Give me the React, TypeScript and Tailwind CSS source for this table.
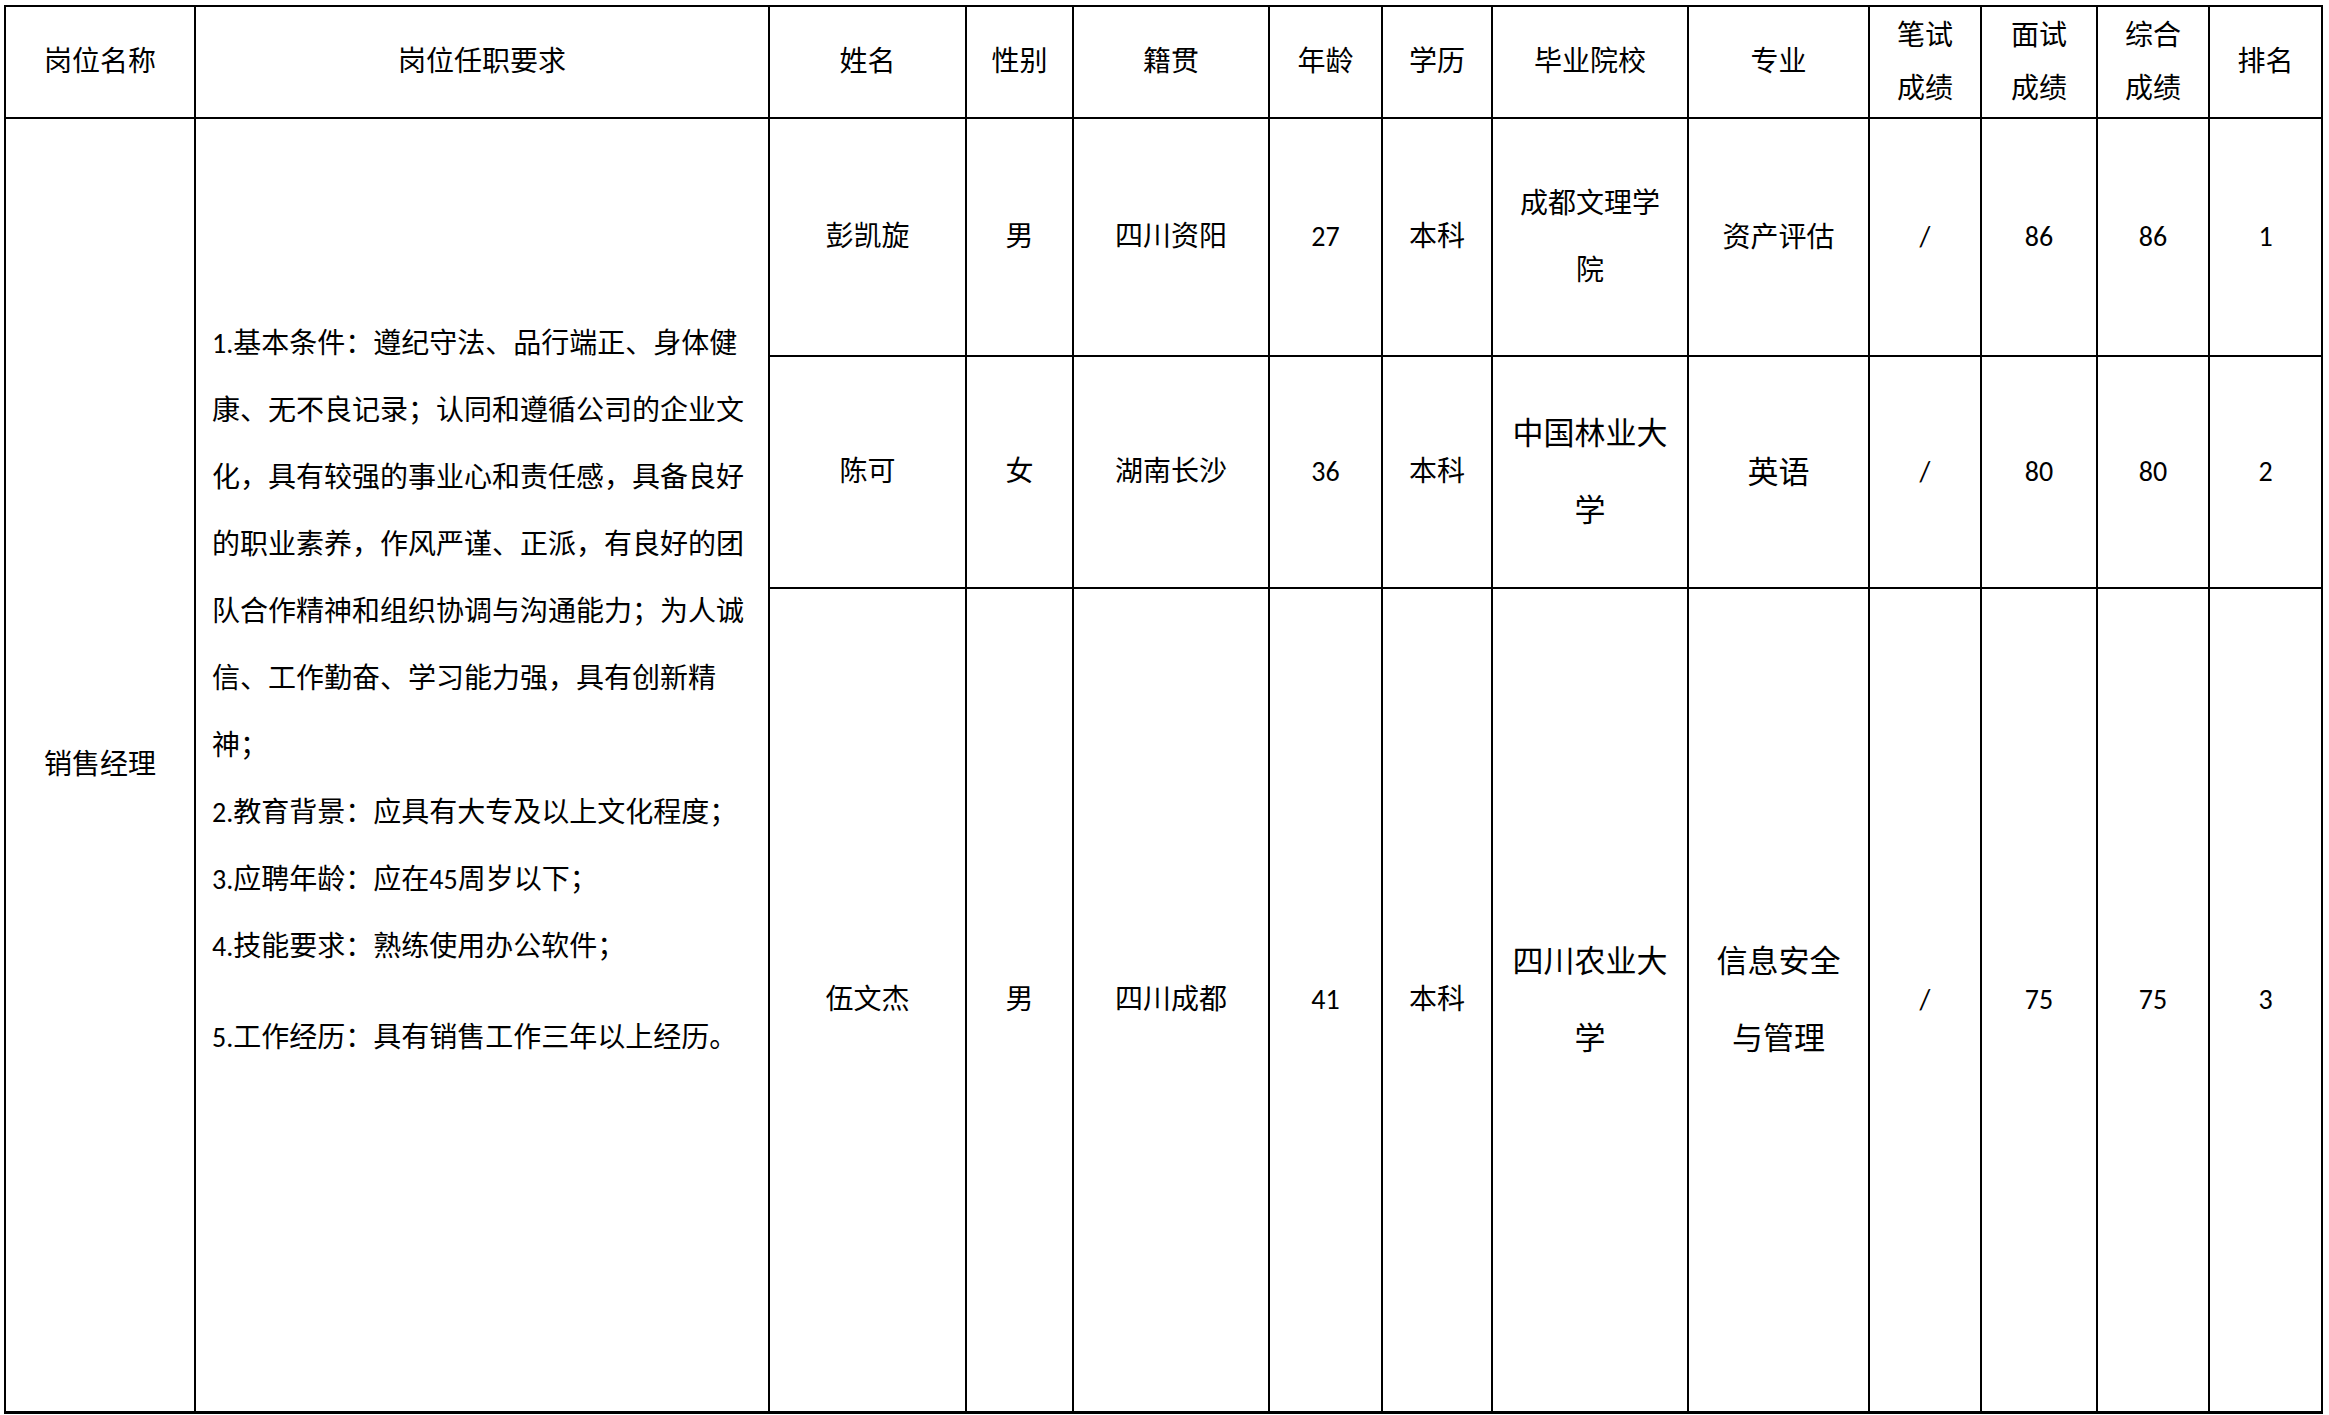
import * as React from "react";

type Cand = {
  name: string;
  sex: string;
  origin: string;
  age: string;
  edu: string;
  school: string[];
  major: string[];
  big: boolean;
  written: string;
  interview: string;
  total: string;
  rank: string;
  height: string;
};

const candidates: Cand[] = [
  {
    name: "彭凯旋",
    sex: "男",
    origin: "四川资阳",
    age: "27",
    edu: "本科",
    school: ["成都文理学", "院"],
    major: ["资产评估"],
    big: false,
    written: "/",
    interview: "86",
    total: "86",
    rank: "1",
    height: "h-[238px]",
  },
  {
    name: "陈可",
    sex: "女",
    origin: "湖南长沙",
    age: "36",
    edu: "本科",
    school: ["中国林业大", "学"],
    major: ["英语"],
    big: true,
    written: "/",
    interview: "80",
    total: "80",
    rank: "2",
    height: "h-[232px]",
  },
  {
    name: "伍文杰",
    sex: "男",
    origin: "四川成都",
    age: "41",
    edu: "本科",
    school: ["四川农业大", "学"],
    major: ["信息安全", "与管理"],
    big: true,
    written: "/",
    interview: "75",
    total: "75",
    rank: "3",
    height: "h-[824px]",
  },
];

const requirements = [
  "1.基本条件：遵纪守法、品行端正、身体健",
  "康、无不良记录；认同和遵循公司的企业文",
  "化，具有较强的事业心和责任感，具备良好",
  "的职业素养，作风严谨、正派，有良好的团",
  "队合作精神和组织协调与沟通能力；为人诚",
  "信、工作勤奋、学习能力强，具有创新精",
  "神；",
  "2.教育背景：应具有大专及以上文化程度；",
  "3.应聘年龄：应在45周岁以下；",
  "4.技能要求：熟练使用办公软件；",
];

const cell = "border-2 border-black text-center align-middle p-0";

function Lines({ lines, className }: { lines: string[]; className: string }) {
  return (
    <div className={className}>
      {lines.map((l) => (
        <div key={l} className="whitespace-nowrap">
          {l}
        </div>
      ))}
    </div>
  );
}

export default function App() {
  return (
    <div className="min-h-screen w-full bg-white pl-[4px] pt-[5px] text-black font-['Carlito','Liberation_Sans','Noto_Sans_CJK_SC',sans-serif] text-[28px]">
      <table className="table-fixed border-collapse w-[2317px] border-b-[3px] border-black">
        <colgroup>
          <col className="w-[190px]" />
          <col className="w-[574px]" />
          <col className="w-[197px]" />
          <col className="w-[107px]" />
          <col className="w-[196px]" />
          <col className="w-[113px]" />
          <col className="w-[110px]" />
          <col className="w-[196px]" />
          <col className="w-[181px]" />
          <col className="w-[112px]" />
          <col className="w-[116px]" />
          <col className="w-[112px]" />
          <col className="w-[113px]" />
        </colgroup>
        <thead>
          <tr className="h-[112px]">
            <th className={`${cell} font-normal`}>岗位名称</th>
            <th className={`${cell} font-normal`}>岗位任职要求</th>
            <th className={`${cell} font-normal`}>姓名</th>
            <th className={`${cell} font-normal`}>性别</th>
            <th className={`${cell} font-normal`}>籍贯</th>
            <th className={`${cell} font-normal`}>年龄</th>
            <th className={`${cell} font-normal`}>学历</th>
            <th className={`${cell} font-normal`}>毕业院校</th>
            <th className={`${cell} font-normal`}>专业</th>
            <th className={`${cell} font-normal`}>
              <Lines lines={["笔试", "成绩"]} className="leading-[53px]" />
            </th>
            <th className={`${cell} font-normal`}>
              <Lines lines={["面试", "成绩"]} className="leading-[53px]" />
            </th>
            <th className={`${cell} font-normal`}>
              <Lines lines={["综合", "成绩"]} className="leading-[53px]" />
            </th>
            <th className={`${cell} font-normal`}>排名</th>
          </tr>
        </thead>
        <tbody>
          {candidates.map((c, i) => (
            <tr key={c.name} className={c.height}>
              {i === 0 && (
                <>
                  <td rowSpan={3} className={cell}>
                    销售经理
                  </td>
                  <td rowSpan={3} className="border-2 border-black align-top pl-[16px] pt-[191px] text-left">
                    <div className="leading-[67px]">
                      {requirements.map((r) => (
                        <div key={r} className="whitespace-nowrap">
                          {r}
                        </div>
                      ))}
                      <div className="mt-[24px] whitespace-nowrap">5.工作经历：具有销售工作三年以上经历。</div>
                    </div>
                  </td>
                </>
              )}
              <td className={cell}>{c.name}</td>
              <td className={cell}>{c.sex}</td>
              <td className={cell}>{c.origin}</td>
              <td className={cell}>{c.age}</td>
              <td className={cell}>{c.edu}</td>
              <td className={cell}>
                <Lines
                  lines={c.school}
                  className={c.big ? "text-[31px] leading-[77px]" : "leading-[67px]"}
                />
              </td>
              <td className={cell}>
                <Lines
                  lines={c.major}
                  className={c.big ? "text-[31px] leading-[77px]" : "leading-[67px]"}
                />
              </td>
              <td className={cell}>{c.written}</td>
              <td className={cell}>{c.interview}</td>
              <td className={cell}>{c.total}</td>
              <td className={cell}>{c.rank}</td>
            </tr>
          ))}
        </tbody>
      </table>
    </div>
  );
}
